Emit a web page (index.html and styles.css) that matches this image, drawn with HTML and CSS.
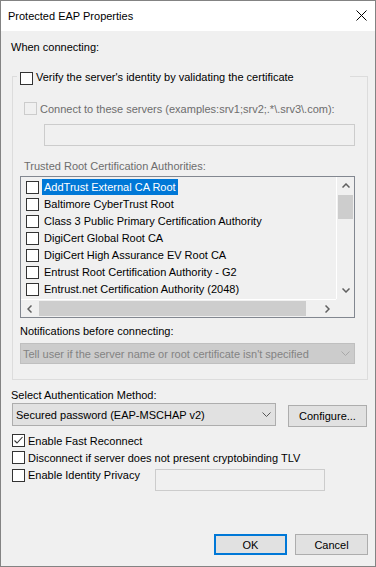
FILE: index.html
```html
<!DOCTYPE html>
<html lang="en">
<head>
  <meta charset="UTF-8">
  <title>Protected EAP Properties</title>
  <link rel="stylesheet" href="styles.css">
</head>
<body>
  <div class="window">
    <!-- Title bar -->
    <div class="titlebar">
      <span class="title">Protected EAP Properties</span>
      <svg class="close" width="11" height="11" viewBox="0 0 11 11">
        <path d="M0.5 0.5 L10.5 10.5 M10.5 0.5 L0.5 10.5" stroke="#000" stroke-width="1" fill="none"/>
      </svg>
    </div>

    <div class="section-label">When connecting:</div>

    <!-- Server validation group -->
    <fieldset class="group">
      <legend class="legend">
        <div class="legend-inner">
          <span class="cb"></span>
          <span class="cb-text">Verify the server's identity by validating the certificate</span>
        </div>
      </legend>

      <div class="connect-row">
        <span class="cb disabled"></span>
        <span class="cb-text muted">Connect to these servers (examples:srv1;srv2;.*\.srv3\.com):</span>
      </div>
      <div class="server-input"></div>

      <div class="trusted-label muted">Trusted Root Certification Authorities:</div>

      <div class="cert-list">
        <div class="list-items">
          <div class="item selected"><span class="cb"></span><span class="item-label">AddTrust External CA Root</span></div>
          <div class="item"><span class="cb"></span><span class="item-label">Baltimore CyberTrust Root</span></div>
          <div class="item"><span class="cb"></span><span class="item-label">Class 3 Public Primary Certification Authority</span></div>
          <div class="item"><span class="cb"></span><span class="item-label">DigiCert Global Root CA</span></div>
          <div class="item"><span class="cb"></span><span class="item-label">DigiCert High Assurance EV Root CA</span></div>
          <div class="item"><span class="cb"></span><span class="item-label">Entrust Root Certification Authority - G2</span></div>
          <div class="item"><span class="cb"></span><span class="item-label">Entrust.net Certification Authority (2048)</span></div>
        </div>
        <div class="vscroll">
          <div class="arrow-btn">
            <svg width="8" height="5" viewBox="0 0 8 5"><polyline points="0.5,4.5 4,1 7.5,4.5" fill="none" stroke="#606060" stroke-width="1.5"/></svg>
          </div>
          <div class="vthumb"></div>
          <div class="spacer"></div>
          <div class="arrow-btn">
            <svg width="8" height="5" viewBox="0 0 8 5"><polyline points="0.5,0.5 4,4 7.5,0.5" fill="none" stroke="#606060" stroke-width="1.5"/></svg>
          </div>
        </div>
        <div class="hscroll">
          <div class="arrow-btn">
            <svg width="5" height="8" viewBox="0 0 5 8"><polyline points="4.5,0.5 1,4 4.5,7.5" fill="none" stroke="#606060" stroke-width="1.5"/></svg>
          </div>
          <div class="hthumb"></div>
          <div class="spacer"></div>
          <div class="arrow-btn">
            <svg width="5" height="8" viewBox="0 0 5 8"><polyline points="0.5,0.5 4,4 0.5,7.5" fill="none" stroke="#606060" stroke-width="1.5"/></svg>
          </div>
        </div>
        <div class="corner"></div>
      </div>

      <div class="notify-label">Notifications before connecting:</div>
      <div class="notify-combo">
        <span>Tell user if the server name or root certificate isn't specified</span>
        <svg width="9" height="5" viewBox="0 0 9 5"><polyline points="0.5,0.5 4.5,4.5 8.5,0.5" fill="none" stroke="#a8a8a8" stroke-width="1"/></svg>
      </div>
    </fieldset>

    <!-- Authentication method -->
    <div class="auth-label">Select Authentication Method:</div>
    <div class="auth-row">
      <div class="combo">
        <span>Secured password (EAP-MSCHAP v2)</span>
        <svg width="9" height="5" viewBox="0 0 9 5"><polyline points="0.5,0.5 4.5,4.5 8.5,0.5" fill="none" stroke="#555" stroke-width="1"/></svg>
      </div>
      <button class="btn configure">Configure...</button>
    </div>

    <div class="check-row">
      <span class="cb">
        <svg width="11" height="11" viewBox="0 0 11 11"><polyline points="1.5,5.5 4,8 9.5,2" fill="none" stroke="#333" stroke-width="1.1"/></svg>
      </span>
      <span class="cb-text">Enable Fast Reconnect</span>
    </div>
    <div class="check-row second">
      <span class="cb"></span>
      <span class="cb-text">Disconnect if server does not present cryptobinding TLV</span>
    </div>
    <div class="check-row third">
      <span class="cb"></span>
      <span class="cb-text privacy">Enable Identity Privacy</span>
      <div class="identity-input"></div>
    </div>

    <!-- Dialog buttons -->
    <div class="actions">
      <button class="btn dialog default">OK</button>
      <button class="btn dialog">Cancel</button>
    </div>
  </div>
</body>
</html>
```
FILE: styles.css
```css
/* Base */
body {
  margin: 0;
  font: 11px/14px "Liberation Sans", Arial, sans-serif;
  color: #000;
  background: #f0f0f0;
}
.window {
  width: 376px;
  height: 567px;
  box-sizing: border-box;
  border: 1px solid #838383;
  background: #f0f0f0;
}
/* Title bar */
.titlebar {
  height: 30px;
  background: #fff;
  display: flex;
  align-items: center;
  justify-content: space-between;
  padding: 0 8px 0 7px;
}
.close {
  margin-top: -1px;
}
.section-label {
  margin: 9px 0 0 10px;
}
.muted {
  color: #6d6d6d;
}
/* Checkboxes */
.cb {
  width: 13px;
  height: 13px;
  box-sizing: border-box;
  border: 1px solid #333;
  background: #fff;
  flex: none;
  display: flex;
  align-items: center;
  justify-content: center;
}
.cb.disabled {
  border-color: #ccc;
  background: #f0f0f0;
}
.cb-text {
  margin-left: 3px;
  white-space: nowrap;
}
/* Group box */
.group {
  margin: 14px 7px 0 11px;
  padding: 0;
  border: 1px solid #dcdcdc;
  min-width: 0;
}
.legend {
  margin-left: 4px;
  padding: 0 0 0 3px;
  width: 333px;
  height: 17px;
  box-sizing: border-box;
}
.legend-inner {
  display: flex;
  align-items: flex-start;
}
.legend-inner .cb {
  margin-top: 4px;
}
.legend-inner .cb-text {
  margin-top: 2px;
}
.connect-row {
  display: flex;
  align-items: center;
  height: 13px;
  margin: 17px 0 0 11px;
}
.server-input {
  margin: 9px 0 0 31px;
  width: 311px;
  height: 22px;
  box-sizing: border-box;
  border: 1px solid #ccc;
  background: #f0f0f0;
}
.trusted-label {
  margin: 13px 0 0 11px;
}
/* Certificate list */
.cert-list {
  margin: 3px 0 0 7px;
  width: 335px;
  height: 142px;
  box-sizing: border-box;
  border: 1px solid #828790;
  display: grid;
  grid-template-columns: 1fr 18px;
  grid-template-rows: 1fr 18px;
  background: #f0f0f0;
}
.list-items {
  padding-top: 2px;
  overflow: hidden;
}
.item {
  height: 17px;
  display: flex;
  align-items: flex-start;
  padding-left: 5px;
  white-space: nowrap;
}
.item .cb {
  margin-top: 2px;
}
.item-label {
  margin-left: 3px;
  padding: 0 2px;
  height: 16px;
  line-height: 16px;
}
.item.selected .item-label {
  background: #0078d7;
  color: #fff;
}
.vscroll {
  border-left: 1px solid #fff;
  display: flex;
  flex-direction: column;
}
.hscroll {
  border-top: 1px solid #fff;
  display: flex;
}
.arrow-btn {
  width: 17px;
  height: 17px;
  flex: none;
  display: flex;
  align-items: center;
  justify-content: center;
}
.spacer {
  flex: 1;
}
.vthumb {
  margin: 1px 1px 0 1px;
  height: 24px;
  background: #cdcdcd;
}
.hthumb {
  margin: 1px 0 1px 1px;
  width: 267px;
  background: #cdcdcd;
}
/* Notifications */
.notify-label {
  margin: 6px 0 0 7px;
}
.notify-combo {
  margin: 5px 0 15px 7px;
  width: 335px;
  height: 21px;
  box-sizing: border-box;
  border: 1px solid #bfbfbf;
  background: #ccc;
  color: #838383;
  display: flex;
  align-items: center;
  justify-content: space-between;
  padding: 0 4px 0 2px;
}
/* Authentication */
.auth-label {
  margin: 8px 0 0 10px;
}
.auth-row {
  display: flex;
  align-items: flex-start;
  margin: 1px 0 0 11px;
}
.combo {
  width: 264px;
  height: 23px;
  box-sizing: border-box;
  border: 1px solid #adadad;
  background: #e1e1e1;
  display: flex;
  align-items: center;
  justify-content: space-between;
  padding: 0 4px 0 3px;
}
.btn {
  font: inherit;
  color: #000;
  padding: 0;
  box-sizing: border-box;
  border: 1px solid #adadad;
  background: #e1e1e1;
  border-radius: 0;
}
.configure {
  width: 79px;
  height: 22px;
  margin: 2px 0 0 12px;
}
.check-row {
  display: flex;
  align-items: center;
  height: 13px;
  margin: 7px 0 0 11px;
}
.check-row.second {
  margin-top: 4px;
}
.check-row.third {
  margin-top: 5px;
  align-items: flex-start;
  height: auto;
}
.check-row.third .cb-text {
  line-height: 13px;
}
.privacy {
  width: 127px;
}
.identity-input {
  width: 170px;
  height: 22px;
  box-sizing: border-box;
  border: 1px solid #ccc;
  background: #f0f0f0;
}
/* Dialog buttons */
.actions {
  display: flex;
  justify-content: flex-end;
  gap: 8px;
  margin-top: 43px;
  padding-right: 7px;
}
.dialog {
  width: 73px;
  height: 21px;
}
.dialog.default {
  border: 2px solid #0078d7;
}
```
